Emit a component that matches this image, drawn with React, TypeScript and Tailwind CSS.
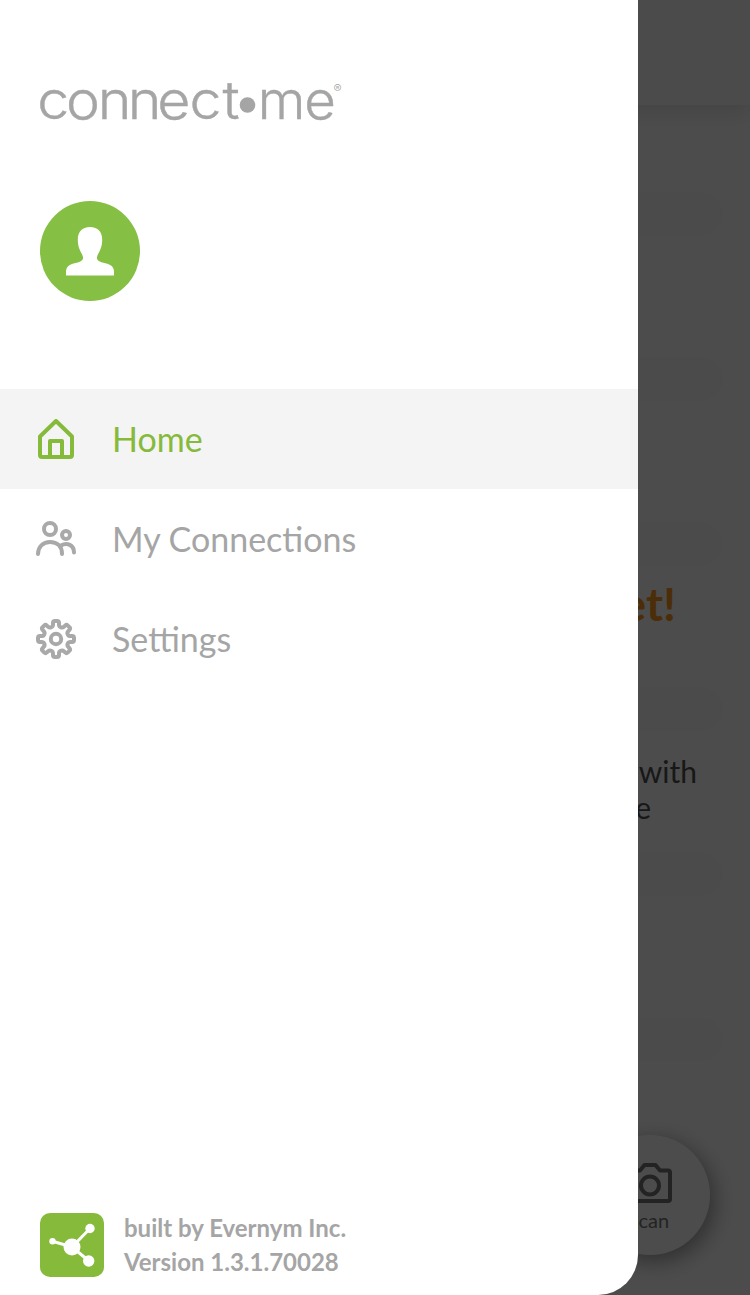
import type { ReactNode } from "react";

function Wordmark() {
  return (
    <svg className="block h-[50px] w-[310px] overflow-visible fill-[#a5a5a5] font-['Inter',sans-serif]" viewBox="0 0 310 50">
      <g stroke="#a5a5a5" strokeWidth="0.400" fontWeight="300" fontSize="53">
        <text transform="scale(1.08 1)" y="44" x="-2.500 24.100 53.400 81.200 108.500 138.400 169">connect</text>
        <text transform="scale(1.03 1)" y="44" x="211.500 256.500">me</text>
      </g>
      <circle cx="207.500" cy="30" r="7.800" />
      <text x="293.500" y="18" fontSize="12" fontWeight="300">®</text>
    </svg>
  );
}

function Avatar() {
  return (
    <svg className="block size-[100px]" viewBox="0 0 100 100">
      <circle cx="50" cy="50" r="50" fill="#85bf43" />
      <path fill="#fff" d="M50 26c8 0 12.200 5 12.200 12.500 0 7-2 10.500-4.200 14.800-1.500 3-1.500 5.200.8 6.700 3.200 2.200 8 2 11.400 4 2.800 1.600 3.800 4 3.800 7v3.500H26V71c0-3 1-5.400 3.800-7 3.400-2 8.200-1.800 11.400-4 2.300-1.500 2.300-3.700.8-6.700-2.200-4.300-4.200-7.800-4.200-14.800C37.800 31 42 26 50 26z" />
    </svg>
  );
}

const iconClass = "block size-10 shrink-0";

function HomeIcon() {
  return (
    <svg className={iconClass} viewBox="0 0 40 40" fill="none" stroke="currentColor" strokeWidth="4" strokeLinejoin="round">
      <path d="M4 17.500 20 2l16 15.500V36q0 2-2 2H6q-2 0-2-2z" />
      <path d="M14 38V22h12v16" />
    </svg>
  );
}

function PeopleIcon() {
  return (
    <svg className={iconClass} viewBox="0 0 40 40" fill="none" stroke="currentColor" strokeWidth="4" strokeLinecap="round">
      <circle cx="14" cy="10" r="6" />
      <circle cx="30" cy="16" r="4" />
      <path d="M2 35c0-7 5-12 12-12s12 4 12 12" />
      <path d="M25 26.500c6-3.500 13-.5 13 7" />
    </svg>
  );
}

function GearIcon() {
  return (
    <svg className={iconClass} viewBox="0 0 40 40" fill="none" stroke="currentColor" strokeWidth="4" strokeLinejoin="round">
      <circle cx="20" cy="20" r="5.200" />
      <path d="M17 4q0-2 2-2h2q2 0 2 2v1.500q0 2 1.700 2.800 1.700.8 3.200-.6l1.200-1.100q1.400-1.300 2.700 0l1.600 1.600q1.300 1.300 0 2.700l-1.100 1.200q-1.400 1.500-.6 3.200.8 1.700 2.800 1.700H36q2 0 2 2v2q0 2-2 2h-1.500q-2 0-2.800 1.700-.8 1.700.6 3.200l1.100 1.200q1.300 1.400 0 2.700l-1.600 1.600q-1.300 1.300-2.700 0l-1.200-1.100q-1.500-1.400-3.200-.6-1.700.8-1.700 2.800V36q0 2-2 2h-2q-2 0-2-2v-1.500q0-2-1.700-2.800-1.700-.8-3.200.6l-1.200 1.100q-1.400 1.300-2.700 0l-1.600-1.600q-1.300-1.300 0-2.700l1.100-1.200q1.400-1.500.6-3.200Q7.500 23 5.500 23H4q-2 0-2-2v-2q0-2 2-2h1.500q2 0 2.800-1.700.8-1.700-.6-3.200l-1.100-1.200q-1.300-1.400 0-2.700l1.600-1.600q1.300-1.300 2.700 0l1.200 1.100q1.500 1.400 3.200.6Q17 7.500 17 5.500z" />
    </svg>
  );
}

function EvernymLogo() {
  return (
    <svg className="block size-16 shrink-0" viewBox="0 0 64 64">
      <rect width="64" height="64" rx="10" fill="#86ba3b" />
      <path d="M12.500 28.300 32 34 50 15.500M32 34l17 14" stroke="#fff" strokeWidth="3" fill="none" />
      <g fill="#fff">
        <circle cx="32" cy="34" r="8.500" />
        <circle cx="12.500" cy="28.300" r="3.200" />
        <circle cx="50" cy="15.500" r="4.700" />
        <circle cx="48.700" cy="48" r="5.700" />
      </g>
    </svg>
  );
}

function CameraIcon() {
  return (
    <svg className="block h-10 w-11" viewBox="0 0 44 40" fill="none" stroke="#757575" strokeWidth="4" strokeLinejoin="round">
      <path d="M4 7.500h8L16.500 2h11L32 7.500h8q2 0 2 2V36q0 2-2 2H4q-2 0-2-2V9.500q0-2 2-2z" />
      <circle cx="22" cy="22.500" r="9" />
    </svg>
  );
}

function NavItem({ icon, label, active = false }: { icon: ReactNode; label: string; active?: boolean }) {
  return (
    <a className={`flex h-[100px] items-center gap-9 pl-9 text-[34px] ${active ? "bg-[#f4f4f4] text-[#86ba3b]" : "text-[#a9a9a9]"}`}>
      {icon}
      <span className={active ? "pb-0.5" : "pb-0.5 text-[#a5a5a5]"}>{label}</span>
    </a>
  );
}

function HomeScreen() {
  return (
    <main className="relative flex h-full flex-col bg-white">
      <header className="h-[105px] shrink-0 bg-[#fafafa] shadow-[0_4px_24px_rgba(0,0,0,0.14)]" />
      <div className="absolute top-[192px] right-[27px] flex flex-col gap-[121px]">
        {[0, 1, 2, 3, 4, 5].map((row) => (
          <div key={row} className="h-11 w-[300px] rounded-full bg-[#fcfcfc]" />
        ))}
      </div>
      <div className="relative flex flex-col items-end pt-[471px]">
        <h1 className="pr-[74px] text-[46px] leading-[56px] font-bold text-[#fa9a21]">yet!</h1>
        <p className="mt-[121px] pr-[53px] text-[30px] leading-9 text-[#505050]">with</p>
        <p className="pr-[99px] text-[30px] leading-9 text-[#505050]">be</p>
      </div>
      <button className="absolute right-10 bottom-10 flex size-[120px] flex-col items-center rounded-full bg-white pt-7 shadow-[4px_6px_22px_rgba(0,0,0,0.4)]">
        <CameraIcon />
        <span className="mt-[5px] -ml-[3px] text-xl leading-6 text-[#757575]">Scan</span>
      </button>
    </main>
  );
}

export default function App() {
  return (
    <div className="relative h-[1295px] w-[750px] overflow-hidden font-['Lato',sans-serif]">
      <HomeScreen />
      <div className="absolute inset-0 bg-black/70">
        <aside className="flex h-full w-[638px] flex-col rounded-br-[40px] bg-white">
          <div className="flex h-[389px] flex-col gap-[76px] pt-[75px] pl-10">
            <Wordmark />
            <Avatar />
          </div>
          <nav>
            <NavItem icon={<HomeIcon />} label="Home" active />
            <NavItem icon={<PeopleIcon />} label="My Connections" />
            <NavItem icon={<GearIcon />} label="Settings" />
          </nav>
          <footer className="mt-auto flex items-center gap-5 pb-4 pl-10">
            <EvernymLogo />
            <div className="pt-px text-2xl leading-[34px] font-bold text-[#a5a5a5]">
              <p>built by Evernym Inc.</p>
              <p>Version 1.3.1.70028</p>
            </div>
          </footer>
        </aside>
      </div>
    </div>
  );
}
